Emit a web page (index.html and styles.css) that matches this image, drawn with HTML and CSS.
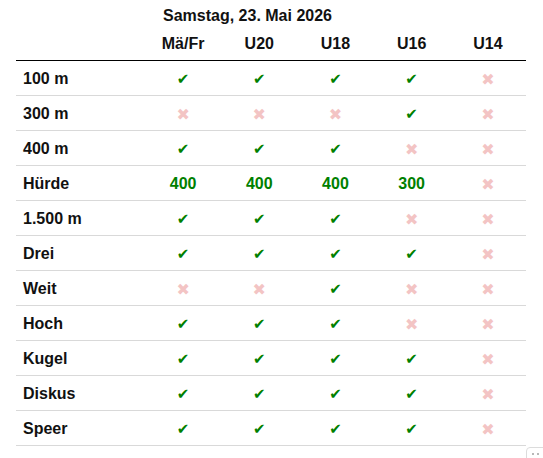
FILE: index.html
```html
<!DOCTYPE html>
<html lang="de">
<head>
<meta charset="utf-8">
<title>Samstag, 23. Mai 2026</title>
<link rel="stylesheet" href="styles.css">
</head>
<body>
<div class="wrap">
  <div class="title">Samstag, 23. Mai 2026</div>
  <table class="grid">
    <colgroup>
      <col class="c-label"><col><col><col><col><col>
    </colgroup>
    <thead>
      <tr><th></th><th>Mä/Fr</th><th>U20</th><th>U18</th><th>U16</th><th>U14</th></tr>
    </thead>
    <tbody>
      <tr><td class="lbl">100 m</td><td class="y">✔</td><td class="y">✔</td><td class="y">✔</td><td class="y">✔</td><td class="n">✖</td></tr>
      <tr><td class="lbl">300 m</td><td class="n">✖</td><td class="n">✖</td><td class="n">✖</td><td class="y">✔</td><td class="n">✖</td></tr>
      <tr><td class="lbl">400 m</td><td class="y">✔</td><td class="y">✔</td><td class="y">✔</td><td class="n">✖</td><td class="n">✖</td></tr>
      <tr><td class="lbl">Hürde</td><td class="v">400</td><td class="v">400</td><td class="v">400</td><td class="v">300</td><td class="n">✖</td></tr>
      <tr><td class="lbl">1.500 m</td><td class="y">✔</td><td class="y">✔</td><td class="y">✔</td><td class="n">✖</td><td class="n">✖</td></tr>
      <tr><td class="lbl">Drei</td><td class="y">✔</td><td class="y">✔</td><td class="y">✔</td><td class="y">✔</td><td class="n">✖</td></tr>
      <tr><td class="lbl">Weit</td><td class="n">✖</td><td class="n">✖</td><td class="y">✔</td><td class="n">✖</td><td class="n">✖</td></tr>
      <tr><td class="lbl">Hoch</td><td class="y">✔</td><td class="y">✔</td><td class="y">✔</td><td class="n">✖</td><td class="n">✖</td></tr>
      <tr><td class="lbl">Kugel</td><td class="y">✔</td><td class="y">✔</td><td class="y">✔</td><td class="y">✔</td><td class="n">✖</td></tr>
      <tr><td class="lbl">Diskus</td><td class="y">✔</td><td class="y">✔</td><td class="y">✔</td><td class="y">✔</td><td class="n">✖</td></tr>
      <tr><td class="lbl">Speer</td><td class="y">✔</td><td class="y">✔</td><td class="y">✔</td><td class="y">✔</td><td class="n">✖</td></tr>
    </tbody>
  </table>
</div>
<div class="handle"><span></span><span></span><span></span><span></span></div>
</body>
</html>
```
FILE: styles.css
```css
html, body {
  margin: 0;
  padding: 0;
  background: #fff;
}
body {
  font-family: "Liberation Sans", Arial, sans-serif;
  font-size: 16px;
  color: #111;
  overflow: hidden;
}
.wrap {
  padding: 4px 0 0 16px;
  width: 510px;
}
.title {
  font-weight: bold;
  line-height: 24px;
  padding-left: 147px;
  color: #111;
}
.grid {
  width: 510px;
  border-collapse: collapse;
  table-layout: fixed;
}
.c-label {
  width: 129px;
}
.grid th {
  height: 32px;
  padding: 0;
  font-weight: bold;
  text-align: center;
  border-bottom: 1px solid #000;
  vertical-align: middle;
}
.grid td {
  height: 32px;
  padding: 2px 0 0;
  text-align: center;
  vertical-align: middle;
  border-bottom: 1px solid #d9d9d9;
  font-weight: bold;
}
.grid td.lbl {
  text-align: left;
  padding-left: 7px;
}
.grid td.y {
  color: #008000;
  font-family: "DejaVu Sans", sans-serif;
  font-size: 15px;
  font-weight: normal;
}
.grid td.v {
  color: #008000;
}
.grid td.n {
  color: #f3c4c4;
  font-family: "DejaVu Sans", sans-serif;
  font-size: 16px;
  font-weight: normal;
}
.handle {
  position: fixed;
  left: 526px;
  top: 447px;
  width: 24px;
  height: 20px;
  border: 1px solid #dcdcdc;
  border-radius: 4px 0 0 0;
  background: #fff;
  display: grid;
  grid-template-columns: 2px 2px;
  grid-auto-rows: 2px;
  gap: 3px;
  padding: 5px 0 0 5px;
  box-sizing: border-box;
}
.handle span {
  background: #b8b8b8;
}
```
